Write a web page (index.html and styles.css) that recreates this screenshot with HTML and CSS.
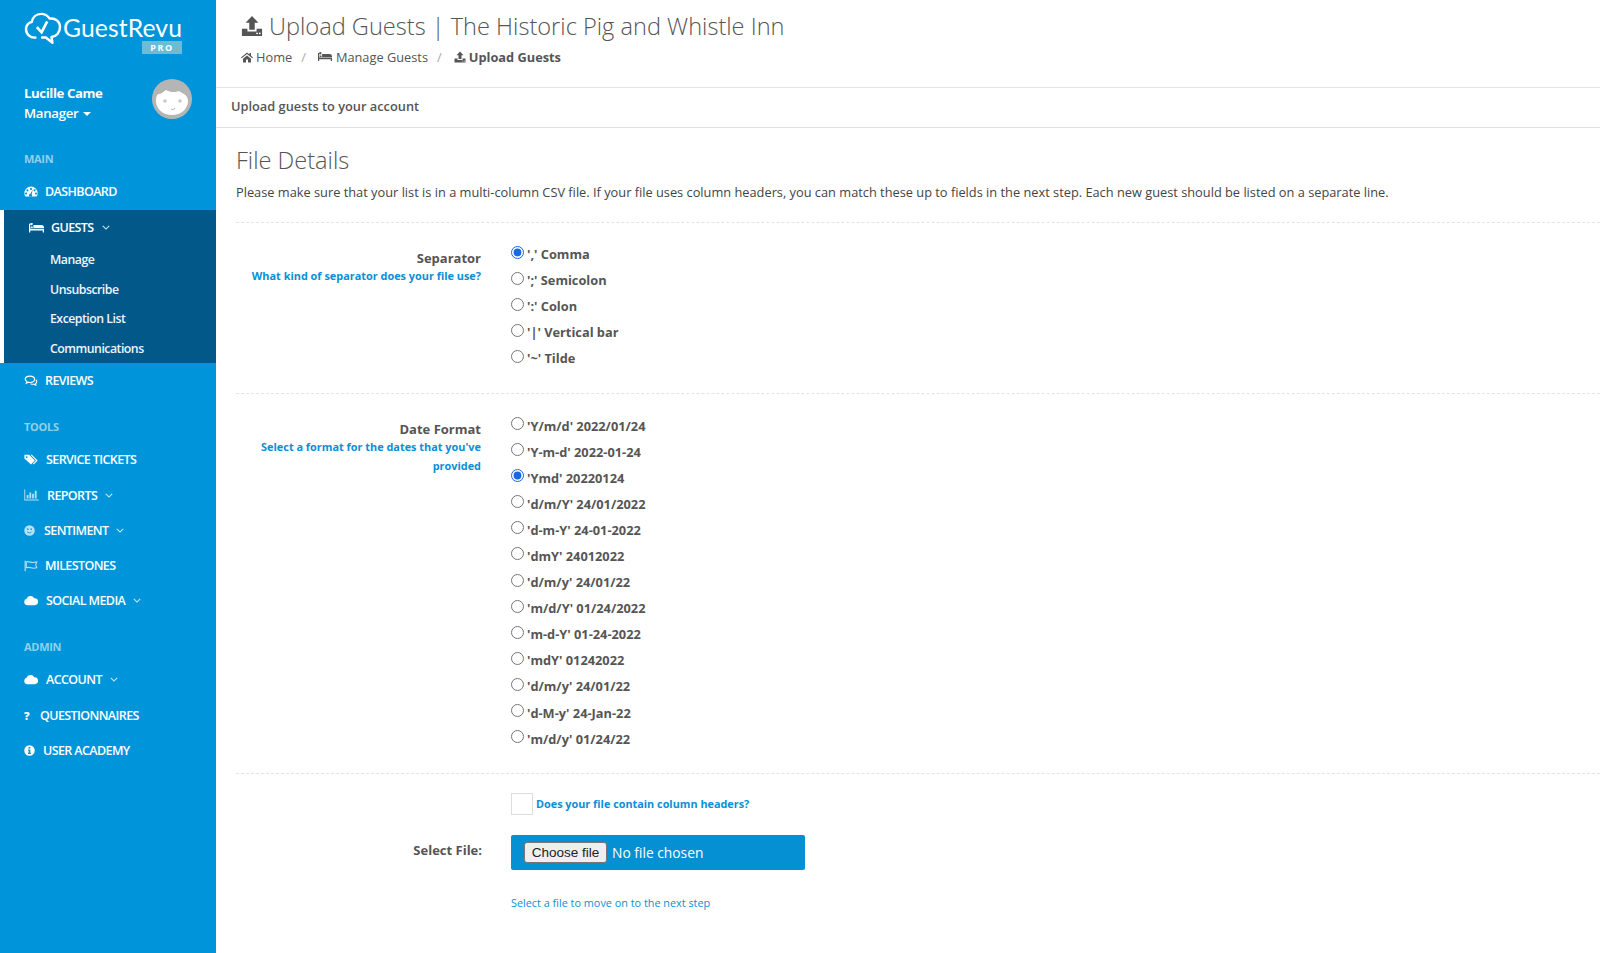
FILE: index.html
```html
<!DOCTYPE html>
<html lang="en">
<head>
<meta charset="utf-8">
<title>Upload Guests</title>
<link rel="stylesheet" href="styles.css">
</head>
<body>
<svg class="defs" width="0" height="0" aria-hidden="true">
  <symbol id="i-upload" viewBox="0 0 24 24"><path d="M12 1l7 7.500h-4V16H9V8.500H5zM1 15h6v3h10v-3h6v8H1z" fill="currentColor"/><circle cx="17.500" cy="20" r="1" fill="#fff"/><circle cx="20.500" cy="20" r="1" fill="#fff"/></symbol>
  <symbol id="i-bed" viewBox="0 0 24 16"><path d="M0 1h2v8h22v6h-2v-3H2v3H0zM4 3.500a2 2 0 1 1 0.100 0zM7 3h13a4 4 0 0 1 4 4v1H7zM3 5.500h3V8H3z" fill="currentColor"/></symbol>
  <symbol id="i-home" viewBox="0 0 24 22"><path d="M12 2L0 12l1.500 1.500L12 5l10.500 8.500L24 12l-4-3.400V3h-3v3zM4 14.500L12 8l8 6.500V22h-6v-6h-4v6H4z" fill="currentColor"/></symbol>
  <symbol id="i-gauge" viewBox="0 0 24 20"><path fill-rule="evenodd" d="M12 1a12 12 0 0 1 12 12c0 2.400-.6 4.500-1.800 6.300H1.800A11.800 11.800 0 0 1 0 13 12 12 0 0 1 12 1zM12 3.500a1.800 1.800 0 1 0 .1 0zM5.500 6a1.800 1.800 0 1 0 .1 0zM18.500 6a1.800 1.800 0 1 0 .1 0zM3 12a1.800 1.800 0 1 0 .1 0zM21 12a1.800 1.800 0 1 0 .1 0zM15 7l-4 7.200a2.600 2.600 0 1 0 2.200 1.100z" fill="currentColor"/></symbol>
  <symbol id="i-comments" viewBox="0 0 24 20"><path d="M10 2c5 0 8.500 2.500 8.500 5.800s-3.500 5.800-8.500 5.800c-1 0-2-.1-2.800-.3L3.500 15l1-3C2.500 11 1.500 9.500 1.500 7.800 1.500 4.500 5 2 10 2z" fill="none" stroke="currentColor" stroke-width="2"/><path d="M20.500 8.500c1.300 1 2 2.200 2 3.500 0 1.600-1 2.900-2.500 3.800l.8 2.700-3.500-1.700c-2 .3-4.300 0-6-.9" fill="none" stroke="currentColor" stroke-width="2"/></symbol>
  <symbol id="i-tags" viewBox="0 0 24 20"><path d="M0 1.500h8.500L19 12l-7 7L0 8zM4 4a1.700 1.700 0 1 0 .1 0z" fill-rule="evenodd" fill="currentColor"/><path d="M11 1.500h2.500L24 12l-7 7-1.500-1.500L21 12z" fill="currentColor"/></symbol>
  <symbol id="i-chart" viewBox="0 0 24 20"><path d="M0 1h1.500v16.500H24V19H0zM4 10h3v6H4zM8.500 6h3v10h-3zM13 8h3v8h-3zM17.500 3h3v13h-3z" fill="currentColor"/></symbol>
  <symbol id="i-smile" viewBox="0 0 20 20"><circle cx="10" cy="10" r="9.500" fill="currentColor"/><circle cx="7" cy="7.500" r="1.400" fill="#0095da"/><circle cx="13" cy="7.500" r="1.400" fill="#0095da"/><path d="M5.500 12c1 3 8 3 9 0" fill="none" stroke="#0095da" stroke-width="1.400"/></symbol>
  <symbol id="i-flag" viewBox="0 0 24 20"><path d="M2 1v18" stroke="currentColor" stroke-width="2" fill="none"/><path d="M4 3c4-2 7 2 11 1l7-1-2 5 2 5c-4 1-7 1-10 0-3-1-5-1-8 0z" stroke="currentColor" stroke-width="1.800" fill="none"/></symbol>
  <symbol id="i-cloud" viewBox="0 0 24 16"><path d="M6 16a5.500 5.500 0 0 1-1.500-10.800A7 7 0 0 1 17.500 4 6 6 0 0 1 18.500 16z" fill="currentColor"/></symbol>
  <symbol id="i-info" viewBox="0 0 20 20"><circle cx="10" cy="10" r="9.500" fill="currentColor"/><rect x="8.200" y="3.500" width="3.400" height="3" fill="#0095da"/><path d="M7.500 8.200h4v6h1.200v2.200H7.300v-2.200h1.100v-3.800H7.500z" fill="#0095da"/></symbol>
  <symbol id="i-chev" viewBox="0 0 10 6"><path d="M1 1l4 4 4-4" fill="none" stroke="currentColor" stroke-width="1.300"/></symbol>
</svg>

<div class="app">
  <aside class="sidebar">
    <div class="brand">
      <svg class="brand-mark" viewBox="0 0 40 36" aria-hidden="true">
        <path d="M13 27C6 28 2 23 2 18c0-4 3-7 6-7.500C9 5.500 13 2 18 2c4 0 7 2 9 5 6-1 11 3 11 9 0 6-4 10-9 10.500l1 6-7-5.500H18" fill="none" stroke="#fff" stroke-width="2.600" stroke-linejoin="round"/>
        <path d="M13.500 16l5 5.500 6-11.500" fill="none" stroke="#fff" stroke-width="2.800"/>
      </svg>
      <div class="brand-text">
        <span class="brand-name">GuestRevu</span>
        <span class="brand-pro">PRO</span>
      </div>
    </div>

    <div class="user">
      <div class="user-info">
        <div class="user-name">Lucille Came</div>
        <div class="user-role">Manager <span class="caret"></span></div>
      </div>
      <svg class="avatar" viewBox="0 0 40 40" aria-hidden="true">
        <circle cx="20" cy="20" r="20" fill="#b5b5b5"/>
        <path d="M4 22c0-4 1-7 3-7 3 0 5-3 7-4 3 2 9 3 13 1 2 2 9 3 9 10 0 8-7 14-16 14S4 30 4 22z" fill="#fff"/>
        <circle cx="13" cy="22" r="1.800" fill="#c9c9c9"/><circle cx="28" cy="22" r="1.800" fill="#c9c9c9"/>
        <path d="M19 30c2 1 3 .5 4-1" fill="none" stroke="#aaa" stroke-width="1"/>
      </svg>
    </div>

    <div class="nav-label nav-label-main">MAIN</div>
    <a class="nav-item"><svg class="ic ic-14"><use href="#i-gauge"/></svg><span>DASHBOARD</span></a>
    <div class="nav-open">
      <a class="nav-item nav-item-open"><svg class="ic ic-16"><use href="#i-bed"/></svg><span>GUESTS</span><svg class="chev"><use href="#i-chev"/></svg></a>
      <a class="nav-sub">Manage</a>
      <a class="nav-sub">Unsubscribe</a>
      <a class="nav-sub">Exception List</a>
      <a class="nav-sub">Communications</a>
    </div>
    <a class="nav-item"><svg class="ic ic-14"><use href="#i-comments"/></svg><span>REVIEWS</span></a>

    <div class="nav-label nav-label-next">TOOLS</div>
    <a class="nav-item"><svg class="ic ic-14 ic-gap8"><use href="#i-tags"/></svg><span>SERVICE TICKETS</span></a>
    <a class="nav-item"><svg class="ic ic-15 ic-pale"><use href="#i-chart"/></svg><span>REPORTS</span><svg class="chev"><use href="#i-chev"/></svg></a>
    <a class="nav-item"><svg class="ic ic-11 ic-pale ic-gap9"><use href="#i-smile"/></svg><span>SENTIMENT</span><svg class="chev"><use href="#i-chev"/></svg></a>
    <a class="nav-item"><svg class="ic ic-13 ic-pale"><use href="#i-flag"/></svg><span>MILESTONES</span></a>
    <a class="nav-item"><svg class="ic ic-14 ic-gap8"><use href="#i-cloud"/></svg><span>SOCIAL MEDIA</span><svg class="chev"><use href="#i-chev"/></svg></a>

    <div class="nav-label nav-label-next">ADMIN</div>
    <a class="nav-item"><svg class="ic ic-14 ic-gap8"><use href="#i-cloud"/></svg><span>ACCOUNT</span><svg class="chev"><use href="#i-chev"/></svg></a>
    <a class="nav-item"><span class="q-mark">?</span><span>QUESTIONNAIRES</span></a>
    <a class="nav-item"><svg class="ic ic-11 ic-gap8"><use href="#i-info"/></svg><span>USER ACADEMY</span></a>
  </aside>

  <main class="main">
    <header class="page-head">
      <h1 class="page-title"><svg class="title-ic"><use href="#i-upload"/></svg>Upload Guests | The Historic Pig and Whistle Inn</h1>
      <nav class="crumbs">
        <svg class="crumb-ic"><use href="#i-home"/></svg><a>Home</a><span class="sep">/</span>
        <svg class="crumb-ic crumb-bed"><use href="#i-bed"/></svg><a>Manage Guests</a><span class="sep">/</span>
        <svg class="crumb-ic"><use href="#i-upload"/></svg><b>Upload Guests</b>
      </nav>
    </header>
    <div class="sub-bar">Upload guests to your account</div>

    <section class="content">
      <h2 class="section-title">File Details</h2>
      <p class="intro">Please make sure that your list is in a multi-column CSV file. If your file uses column headers, you can match these up to fields in the next step. Each new guest should be listed on a separate line.</p>

      <form class="form">
        <div class="form-group">
          <div class="form-label">
            <div class="label-main">Separator</div>
            <div class="label-help">What kind of separator does your file use?</div>
          </div>
          <div class="radios">
            <label class="radio"><input type="radio" name="sep" checked>',' Comma</label>
            <label class="radio"><input type="radio" name="sep">';' Semicolon</label>
            <label class="radio"><input type="radio" name="sep">':' Colon</label>
            <label class="radio"><input type="radio" name="sep">'|' Vertical bar</label>
            <label class="radio"><input type="radio" name="sep">'~' Tilde</label>
          </div>
        </div>

        <div class="form-group">
          <div class="form-label">
            <div class="label-main">Date Format</div>
            <div class="label-help">Select a format for the dates that you've provided</div>
          </div>
          <div class="radios">
            <label class="radio"><input type="radio" name="date">'Y/m/d' 2022/01/24</label>
            <label class="radio"><input type="radio" name="date">'Y-m-d' 2022-01-24</label>
            <label class="radio"><input type="radio" name="date" checked>'Ymd' 20220124</label>
            <label class="radio"><input type="radio" name="date">'d/m/Y' 24/01/2022</label>
            <label class="radio"><input type="radio" name="date">'d-m-Y' 24-01-2022</label>
            <label class="radio"><input type="radio" name="date">'dmY' 24012022</label>
            <label class="radio"><input type="radio" name="date">'d/m/y' 24/01/22</label>
            <label class="radio"><input type="radio" name="date">'m/d/Y' 01/24/2022</label>
            <label class="radio"><input type="radio" name="date">'m-d-Y' 01-24-2022</label>
            <label class="radio"><input type="radio" name="date">'mdY' 01242022</label>
            <label class="radio"><input type="radio" name="date">'d/m/y' 24/01/22</label>
            <label class="radio"><input type="radio" name="date">'d-M-y' 24-Jan-22</label>
            <label class="radio"><input type="radio" name="date">'m/d/y' 01/24/22</label>
          </div>
        </div>

        <div class="form-last">
          <label class="check"><span class="check-box"></span>Does your file contain column headers?</label>
          <div class="file-row">
            <div class="file-label">Select File:</div>
            <div class="file-field"><button class="file-btn" type="button">Choose file</button><span class="file-name">No file chosen</span></div>
          </div>
          <div class="file-hint">Select a file to move on to the next step</div>
        </div>
      </form>
    </section>
  </main>
</div>
</body>
</html>
```

FILE: styles.css
```css
* { box-sizing: border-box; }
html, body { margin: 0; height: 100%; }
body { font-family: "Open Sans", "Liberation Sans", sans-serif; color: #555; background: #fff; overflow: hidden; }
.defs { position: absolute; }

.app { display: flex; height: 953px; }

/* Sidebar */
.sidebar { flex: 0 0 216px; background: #0095da; color: #fff; display: flex; flex-direction: column; }
.brand { display: flex; align-items: flex-start; padding: 12px 0 0 24px; height: 80px; gap: 1px; }
.brand-mark { width: 38px; height: 34px; flex: none; }
.brand-text { display: flex; flex-direction: column; align-items: flex-end; width: 119px; }
.brand-name { font-family: "Lato", sans-serif; font-size: 24.700px; line-height: 29px; letter-spacing: 0.1px; margin-top: 1px; }
.brand-pro { background: #6cbcd8; font-size: 9px; font-weight: 700; letter-spacing: 1.5px; width: 40px; height: 13px; line-height: 13px; text-align: center; margin-top: -1px; }

.user { display: flex; justify-content: space-between; align-items: center; padding: 0 24px 0 24px; height: 40px; margin-top: -1px; }
.user-info { margin-top: 8px; }
.user-name { font-size: 13.200px; font-weight: 700; line-height: 19px; letter-spacing: -0.4px; }
.user-role { font-size: 13.200px; font-weight: 600; line-height: 20px; letter-spacing: -0.3px; }
.caret { display: inline-block; border: 4px solid transparent; border-top-color: #fff; border-bottom: 0; vertical-align: 2px; margin-left: 2px; }
.avatar { width: 40px; height: 40px; }

.nav-label { font-size: 11px; font-weight: 700; color: #8fd0ec; line-height: 20px; height: 20px; padding-left: 24px; letter-spacing: -0.3px; }
.nav-label-main { margin-top: 30px; margin-bottom: 5px; }
.nav-label-next { margin-top: 18.500px; margin-bottom: 5px; }

.nav-item { display: flex; align-items: center; height: 35.300px; padding-left: 24px; font-size: 12.500px; font-weight: 600; letter-spacing: -0.6px; color: #fff; }
.ic { flex: none; display: block; color: #fff; }
.ic-pale { opacity: 0.72; }
.ic-11 { width: 11px; height: 11px; margin-right: 8px; }
.ic-13 { width: 14px; height: 12px; margin-right: 7px; }
.ic-14 { width: 14px; height: 11px; margin-right: 7px; }
.ic-gap8 { margin-right: 8px; }
.ic-gap9 { margin-right: 9px; }
.ic-15 { width: 15px; height: 12px; margin-right: 8px; }
.ic-16 { width: 15px; height: 10px; margin-right: 7px; }
.q-mark { width: 8px; margin-right: 8px; font-size: 11px; font-weight: 800; }
.chev { width: 8px; height: 5px; margin-left: 8px; flex: none; color: #cfeaf7; }

.nav-open { background: #03588a; border-left: 4px solid #fff; margin-top: 1px; height: 153px; }
.nav-item-open { height: 35px; padding-left: 25px; }
.nav-sub { display: block; height: 29.500px; line-height: 29.500px; padding-left: 46px; font-size: 12.300px; font-weight: 600; letter-spacing: -0.5px; color: #eef6fb; }

/* Main */
.main { flex: 1; min-width: 0; }
.page-head { height: 88px; border-bottom: 1px solid #e6e6e6; padding: 10px 0 0 25px; }
.page-title { margin: 0; display: flex; align-items: center; font-size: 23.600px; font-weight: 300; line-height: 32px; color: #555; height: 32px; }
.title-ic { width: 22px; height: 22px; margin-right: 6px; color: #555; flex: none; }
.crumbs { display: flex; align-items: center; margin-top: 5px; height: 20px; font-size: 12.800px; color: #555; }
.crumbs b { font-weight: 700; }
.crumb-ic { width: 12px; height: 12px; margin-right: 3px; flex: none; color: #555; }
.crumb-bed { width: 14px; height: 10px; margin-right: 4px; }
.sep { color: #aaa; margin: 0 12px 0 9px; }

.sub-bar { height: 40px; line-height: 36px; border-bottom: 1px solid #e0e0e0; padding-left: 15px; font-size: 12.800px; font-weight: 600; color: #555; }

.content { padding: 0 0 0 20px; }
.section-title { margin: 17px 0 0; font-size: 23.600px; font-weight: 300; line-height: 30px; color: #555; }
.intro { margin: 7px 0 0; font-size: 12.800px; line-height: 20px; color: #444; white-space: nowrap; height: 20px; }

.form-group { display: flex; border-top: 1px dashed #e4e4e4; margin-top: 20px; }
.form-group + .form-group { margin-top: 0; }
.form-label { width: 245px; text-align: right; padding-top: 25px; flex: none; }
.label-main { font-size: 13px; font-weight: 700; line-height: 20px; color: #555; }
.label-help { font-size: 10.900px; font-weight: 700; line-height: 18.500px; color: #0a8fd6; margin-top: -1px; }
.radios { margin-left: 30px; padding: 18px 0 22px; }
.radio { display: flex; align-items: center; height: 26.100px; font-size: 12.800px; font-weight: 700; color: #555; }
.radio input { width: 13px; height: 13px; margin: -4px 3px 0 0; accent-color: #1967e6; flex: none; }

.form-last { border-top: 1px dashed #e4e4e4; padding-left: 275px; margin-top: -1px; padding-top: 19px; }
.check { display: flex; align-items: center; font-size: 10.850px; font-weight: 700; color: #0a8fd6; height: 22px; }
.check-box { width: 22px; height: 22px; border: 1px solid #ddd; margin-right: 3px; flex: none; }
.file-row { display: flex; margin-top: 20px; position: relative; }
.file-label { position: absolute; right: 100%; margin-right: 29px; top: 5px; font-size: 13px; font-weight: 700; color: #555; white-space: nowrap; line-height: 20px; }
.file-field { width: 294px; height: 35px; background: #0590d3; border-radius: 2px; padding: 0 13px; display: flex; align-items: center; gap: 5px; }
.file-btn { width: 83px; height: 21px; padding: 0; font-family: "Liberation Sans", sans-serif; font-size: 13.500px; color: #222; background: #efefef; border: 1px solid #767676; border-radius: 3px; }
.file-name { color: #fff; font-size: 13.800px; }
.file-hint { margin-top: 23px; font-size: 10.850px; color: #0a8fd6; line-height: 20px; }
```
